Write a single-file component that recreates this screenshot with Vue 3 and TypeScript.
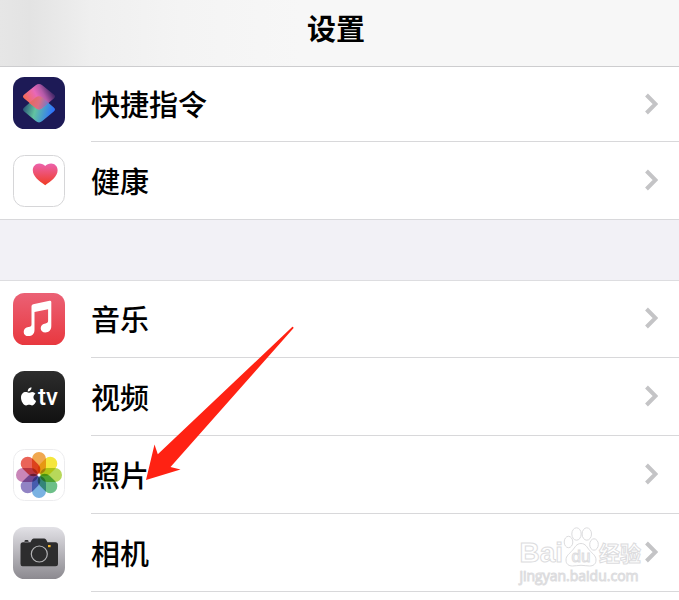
<script setup lang="ts">
type IconName = 'shortcuts' | 'health' | 'music' | 'tv' | 'photos' | 'camera'

interface SettingItem {
  label: string
  icon: IconName
}

const groups: SettingItem[][] = [
  [
    { label: '快捷指令', icon: 'shortcuts' },
    { label: '健康', icon: 'health' },
  ],
  [
    { label: '音乐', icon: 'music' },
    { label: '视频', icon: 'tv' },
    { label: '照片', icon: 'photos' },
    { label: '相机', icon: 'camera' },
  ],
]

const petals: string[] = ['#f0a850', '#f5e63c', '#b7d85a', '#6dbf88', '#7ab2e2', '#9183c4', '#c986b8', '#ea6458']
</script>

<template>
  <div class="settings">
    <header class="bar">
      <h1 class="title">设置</h1>
    </header>

    <main class="groups">
      <ul v-for="(group, g) in groups" :key="g" class="group">
        <li v-for="item in group" :key="item.icon" class="row">
          <a class="link" href="#">
            <svg v-if="item.icon === 'shortcuts'" class="icon" viewBox="0 0 52 52" aria-hidden="true">
              <defs>
                <linearGradient id="upper" x1="0.15" y1="0.8" x2="0.95" y2="0.45">
                  <stop offset="0" stop-color="#f46a55" />
                  <stop offset="0.45" stop-color="#e868b8" />
                  <stop offset="0.7" stop-color="#b45aa8" />
                  <stop offset="1" stop-color="#4a2a6c" />
                </linearGradient>
                <linearGradient id="lower" x1="0.05" y1="0.3" x2="0.95" y2="0.5">
                  <stop offset="0" stop-color="#2c5a78" />
                  <stop offset="0.4" stop-color="#62c3a0" />
                  <stop offset="1" stop-color="#2f74fa" />
                </linearGradient>
                <linearGradient id="shared" x1="0" y1="0.4" x2="1" y2="0.6">
                  <stop offset="0" stop-color="#e8685c" />
                  <stop offset="0.5" stop-color="#dc6e84" />
                  <stop offset="1" stop-color="#6a78d0" />
                </linearGradient>
              </defs>
              <rect width="52" height="52" rx="11.5" fill="#1d1a56" />
              <path d="M22.700 20.500 11.200 30.600q-2.400 2 0 4l11.500 9.500q3.300 2.600 6.600 0l11.500-9.500q2.400-2 0-4L29.300 20.500q-3.300-2.600-6.600 0Z" fill="url(#lower)" />
              <path d="M22.700 8.300 11.200 17.600q-2.400 2 0 4l11.500 9.500q3.300 2.600 6.600 0l11.500-9.500q2.400-2 0-4L29.300 8.300q-3.300-2.600-6.600 0Z" fill="url(#upper)" />
              <path d="m16.300 26 6.400-5.500q3.300-2.600 6.600 0l6.400 5.500-6.400 5.100q-3.300 2.600-6.600 0Z" fill="url(#shared)" />
            </svg>

            <svg v-else-if="item.icon === 'health'" class="icon" viewBox="0 0 52 52" aria-hidden="true">
              <defs>
                <linearGradient id="heart" x1="0" y1="0" x2="0" y2="1">
                  <stop offset="0" stop-color="#ec62ac" />
                  <stop offset="1" stop-color="#f03c24" />
                </linearGradient>
              </defs>
              <rect x="0.5" y="0.5" width="51" height="51" rx="11" fill="#fff" stroke="#d6d6d8" />
              <path d="M32.200 30.200C26 26 19.800 21.500 19.800 15.300c0-3.900 2.900-6.700 6.400-6.700 2.600 0 4.700 1.200 6 2.300 1.300-1.100 3.400-2.300 6-2.300 3.500 0 6.400 2.800 6.400 6.700 0 6.200-6.200 10.700-12.400 14.900Z" fill="url(#heart)" />
            </svg>

            <svg v-else-if="item.icon === 'music'" class="icon" viewBox="0 0 52 52" aria-hidden="true">
              <defs>
                <linearGradient id="rose" x1="0" y1="0" x2="0" y2="1">
                  <stop offset="0" stop-color="#eb6175" />
                  <stop offset="1" stop-color="#e8383f" />
                </linearGradient>
              </defs>
              <rect width="52" height="52" rx="11.5" fill="url(#rose)" />
              <path d="M18.500 13.200q0-1.700 1.700-2L36.500 7.700q1.800-.3 1.800 1.400V33c0 4-2.300 6.400-6 6.400-2.700 0-4.600-1.800-4.600-4.200 0-2.700 1.900-4.300 4.800-4.800 1.900-.3 2.600-1 2.600-2.800V16.200L21.500 19v17.700c0 4-2.300 6.400-6.200 6.400-2.700 0-4.600-1.700-4.600-4.200 0-2.600 1.900-4.300 4.800-4.800 2.200-.4 3-.9 3-2.900Z" fill="#fff" />
            </svg>

            <svg v-else-if="item.icon === 'tv'" class="icon" viewBox="0 0 52 52" aria-hidden="true">
              <defs>
                <linearGradient id="night" x1="0" y1="0" x2="0" y2="1">
                  <stop offset="0" stop-color="#2d2d2d" />
                  <stop offset="1" stop-color="#111111" />
                </linearGradient>
              </defs>
              <rect width="52" height="52" rx="11.5" fill="url(#night)" />
              <path d="M18.500 16.200c.2 2.300-1.700 4.300-3.800 4.300-.2-2.200 1.700-4.200 3.800-4.300ZM8 26.600c0-3.600 2.300-5.600 4.700-5.600 1.200 0 2.100.7 3 .7.800 0 2-.8 3.400-.8 1.500 0 2.700.8 3.400 1.900-3 1.800-2.600 5.900.6 7.200-.8 2.200-2.300 4.500-4 4.500-1.100 0-1.700-.7-3-.7s-1.900.7-3 .7C10.500 34.500 8 30.300 8 26.600Z" fill="#fff" />
              <text class="tv" x="25" y="34">tv</text>
            </svg>

            <svg v-else-if="item.icon === 'photos'" class="icon" viewBox="0 0 52 52" aria-hidden="true">
              <rect x="0.5" y="0.5" width="51" height="51" rx="11" fill="#fff" stroke="#ececee" />
              <rect
                v-for="(color, i) in petals"
                :key="color"
                class="petal"
                x="19"
                y="3"
                width="14"
                height="22"
                rx="7"
                :fill="color"
                :transform="`rotate(${i * 45} 26 26)`"
              />
              <circle cx="26" cy="26" r="1.500" fill="#fff" />
            </svg>

            <svg v-else class="icon" viewBox="0 0 52 52" aria-hidden="true">
              <defs>
                <linearGradient id="steel" x1="0" y1="0" x2="0" y2="1">
                  <stop offset="0" stop-color="#e2e1e6" />
                  <stop offset="1" stop-color="#8c8a90" />
                </linearGradient>
              </defs>
              <rect width="52" height="52" rx="11.5" fill="url(#steel)" />
              <path d="M11.500 14.300q0-1.300 1.300-1.300h1.400q1.300 0 1.300 1.300v1h2q1.300-3.900 3.400-3.900h10.200q2.100 0 3.400 3.900H42.500q2.500 0 2.500 2.500v19q0 2.500-2.500 2.500h-33Q7.500 39.300 7.500 36.800v-19q0-2.500 2.500-2.500h1.500Z" fill="#2d2d2e" />
              <path d="M11.500 15.200h4" stroke="#b9b8bd" stroke-width="0.6" />
              <circle cx="26.3" cy="27" r="8" fill="none" stroke="#b4b4b6" stroke-width="1.2" />
              <rect x="35" y="18" width="2.6" height="2.2" fill="#f3b62d" />
            </svg>

            <span class="body">
              <span class="label">{{ item.label }}</span>
              <svg class="chevron" viewBox="0 0 14 24" aria-hidden="true">
                <path d="m2.500 3 9 9-9 9" fill="none" stroke="#c4c4c6" stroke-width="4" />
              </svg>
            </span>
          </a>
        </li>
      </ul>

      <svg class="pointer" viewBox="0 0 148 156" aria-hidden="true">
        <path d="M146.400 0.800Q147.800 0.800 147.400 2.200L24.500 141 34.500 143.500 0 154 8.500 118.500 11.800 128.300Z" fill="#ff2213" />
      </svg>

      <div class="watermark">
        <div class="brand">
          <span class="latin">Bai</span>
          <span class="paw">
            <svg class="paw-shape" viewBox="0 0 36 40" aria-hidden="true">
              <g fill="#fff" stroke="#dcdcde">
                <ellipse cx="5.500" cy="15" rx="4.300" ry="5.700" />
                <ellipse cx="13.500" cy="7" rx="4.700" ry="6.200" />
                <ellipse cx="23.800" cy="7" rx="4.700" ry="6.200" />
                <ellipse cx="31" cy="17.500" rx="4.300" ry="5.700" />
                <path d="M18 16.500c4.500 0 6 3.800 8.500 6.800 3 3.500 6.500 5.200 6.500 9.700 0 4.200-2.800 6-6.500 6-3 0-5.500-.7-8.500-.7s-5.500.7-8.500.7C5.800 39 3 37.200 3 33c0-4.500 3.500-6.200 6.500-9.700 2.500-3 4-6.800 8.500-6.800Z" />
              </g>
            </svg>
            <span class="du">du</span>
          </span>
          <span class="han">经验</span>
        </div>
        <div class="site">jingyan.baidu.com</div>
      </div>
    </main>
  </div>
</template>

<style>
body {
  margin: 0;
  background: #fff;
}
</style>

<style scoped>
.settings {
  font-family: 'Liberation Sans', 'Noto Sans CJK SC', sans-serif;
  color: #000;
}

.bar {
  display: flex;
  align-items: center;
  justify-content: center;
  padding: 7px 0 19px;
  border-bottom: 1px solid #cdcdcf;
  background: linear-gradient(90deg, #e6e6e6 0, #e3e3e3 30px, #efefef 90px, #f4f4f4 180px, #f7f7f7 300px);
}

.title {
  margin: 0;
  padding-right: 7px;
  font-family: 'Noto Sans CJK SC', sans-serif;
  font-size: 29px;
  line-height: 40px;
  font-weight: 700;
}

.groups {
  position: relative;
}

.group {
  margin: 0;
  padding: 0;
  list-style: none;
}

.group + .group {
  border-top: 60px solid #f2f1f6;
  box-shadow: inset 0 1px 0 #dddde0;
}

.link {
  display: flex;
  gap: 26px;
  padding-left: 13px;
  color: inherit;
  text-decoration: none;
}

.icon {
  flex: none;
  width: 52px;
  height: 52px;
  margin-top: 13px;
  isolation: isolate;
}

.body {
  flex: 1;
  display: flex;
  align-items: center;
  justify-content: space-between;
  height: 76px;
  padding: 0 21px 1px 0;
  border-bottom: 1px solid #d8d8da;
}

.group:first-child .row:first-child .icon {
  margin-top: 10px;
}

.group:first-child .row:first-child .body {
  height: 73px;
}

.group:first-child .row:last-child {
  border-bottom: 1px solid #d8d8db;
}

.group:first-child .row:last-child .body {
  border-bottom: 0;
}

.label {
  padding-bottom: 1px;
  font-family: 'Noto Sans CJK SC', sans-serif;
  font-size: 29px;
  line-height: 40px;
  font-weight: 500;
}

.chevron {
  width: 14px;
  height: 24px;
}

.tv {
  font-family: Roboto, sans-serif;
  font-size: 24px;
  font-weight: 500;
  fill: #fff;
}

.petal {
  mix-blend-mode: multiply;
}

.pointer {
  position: absolute;
  left: 146px;
  top: 259px;
  width: 148px;
  height: 156px;
}

.watermark {
  position: absolute;
  right: 38px;
  bottom: 7px;
  color: #fff;
  -webkit-text-stroke: 1px #dcdcde;
  pointer-events: none;
}

.brand {
  display: flex;
  align-items: flex-end;
  height: 40px;
}

.latin {
  font-size: 28px;
  line-height: 28px;
  font-weight: 700;
}

.paw {
  display: grid;
  width: 36px;
  height: 40px;
}

.paw-shape,
.du {
  grid-area: 1 / 1;
}

.du {
  align-self: end;
  justify-self: center;
  font-size: 17px;
  line-height: 20px;
}

.han {
  font-size: 21px;
  line-height: 27px;
  font-weight: 700;
}

.site {
  font-family: 'Open Sans', sans-serif;
  font-size: 14px;
  line-height: 18px;
}
</style>
